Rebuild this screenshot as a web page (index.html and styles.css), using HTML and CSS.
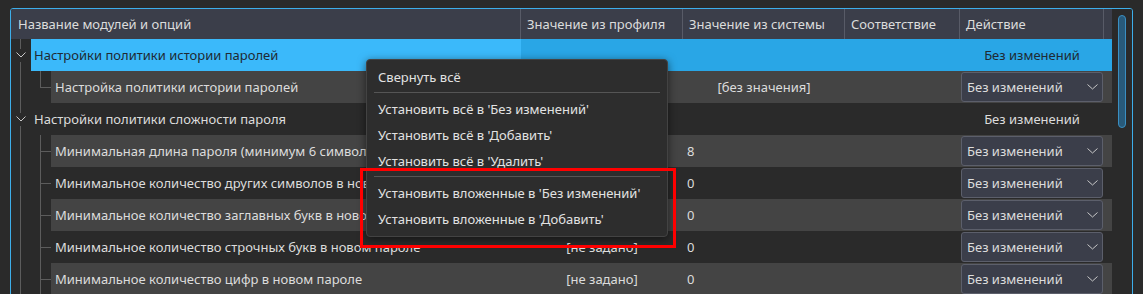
FILE: index.html
```html
<!DOCTYPE html>
<html lang="ru">
<head>
<meta charset="utf-8">
<link rel="stylesheet" href="styles.css">
</head>
<body>
<div class="app">
  <div class="frame">
    <div class="table">
      <div class="grid header">
        <div class="hc first">Название модулей и опций</div>
        <div class="hc">Значение из профиля</div>
        <div class="hc">Значение из системы</div>
        <div class="hc">Соответствие</div>
        <div class="hc">Действие</div>
        <div class="hc last"></div>
      </div>

      <div class="grid row sel">
        <div class="name"><span class="ind group"><svg width="10" height="6" viewBox="0 0 10 6"><polyline points="0.5,0.5 5,5 9.5,0.5" fill="none" stroke="#c8c8c8" stroke-width="1"/></svg></span><span class="label top">Настройки политики истории паролей</span></div>
        <div class="c"></div>
        <div class="c"></div>
        <div class="c"></div>
        <div class="c center">Без изменений</div>
        <div class="c"></div>
      </div>

      <div class="grid row alt">
        <div class="name"><span class="ind vline"></span><span class="ind lastchild"></span><span class="label">Настройка политики истории паролей</span></div>
        <div class="c"></div>
        <div class="c center">[без значения]</div>
        <div class="c"></div>
        <div class="c"><div class="combo"><span>Без изменений</span><svg width="11" height="6" viewBox="0 0 11 6"><polyline points="0.5,0.5 5.5,5 10.5,0.5" fill="none" stroke="#c8c8c8" stroke-width="1"/></svg></div></div>
        <div class="c"></div>
      </div>

      <div class="grid row">
        <div class="name"><span class="ind group"><svg width="10" height="6" viewBox="0 0 10 6"><polyline points="0.5,0.5 5,5 9.5,0.5" fill="none" stroke="#c8c8c8" stroke-width="1"/></svg></span><span class="label top">Настройки политики сложности пароля</span></div>
        <div class="c"></div>
        <div class="c"></div>
        <div class="c"></div>
        <div class="c center">Без изменений</div>
        <div class="c"></div>
      </div>

      <div class="grid row alt">
        <div class="name"><span class="ind vline"></span><span class="ind child"></span><span class="label">Минимальная длина пароля (минимум 6 символов)</span></div>
        <div class="c"></div>
        <div class="c num">8</div>
        <div class="c"></div>
        <div class="c"><div class="combo"><span>Без изменений</span><svg width="11" height="6" viewBox="0 0 11 6"><polyline points="0.5,0.5 5.5,5 10.5,0.5" fill="none" stroke="#c8c8c8" stroke-width="1"/></svg></div></div>
        <div class="c"></div>
      </div>

      <div class="grid row">
        <div class="name"><span class="ind vline"></span><span class="ind child"></span><span class="label">Минимальное количество других символов в новом пароле</span></div>
        <div class="c"></div>
        <div class="c num">0</div>
        <div class="c"></div>
        <div class="c"><div class="combo"><span>Без изменений</span><svg width="11" height="6" viewBox="0 0 11 6"><polyline points="0.5,0.5 5.5,5 10.5,0.5" fill="none" stroke="#c8c8c8" stroke-width="1"/></svg></div></div>
        <div class="c"></div>
      </div>

      <div class="grid row alt">
        <div class="name"><span class="ind vline"></span><span class="ind child"></span><span class="label">Минимальное количество заглавных букв в новом пароле</span></div>
        <div class="c"></div>
        <div class="c num">0</div>
        <div class="c"></div>
        <div class="c"><div class="combo"><span>Без изменений</span><svg width="11" height="6" viewBox="0 0 11 6"><polyline points="0.5,0.5 5.5,5 10.5,0.5" fill="none" stroke="#c8c8c8" stroke-width="1"/></svg></div></div>
        <div class="c"></div>
      </div>

      <div class="grid row">
        <div class="name"><span class="ind vline"></span><span class="ind child"></span><span class="label">Минимальное количество строчных букв в новом пароле</span></div>
        <div class="c center">[не задано]</div>
        <div class="c num">0</div>
        <div class="c"></div>
        <div class="c"><div class="combo"><span>Без изменений</span><svg width="11" height="6" viewBox="0 0 11 6"><polyline points="0.5,0.5 5.5,5 10.5,0.5" fill="none" stroke="#c8c8c8" stroke-width="1"/></svg></div></div>
        <div class="c"></div>
      </div>

      <div class="grid row alt">
        <div class="name"><span class="ind vline"></span><span class="ind child"></span><span class="label">Минимальное количество цифр в новом пароле</span></div>
        <div class="c center">[не задано]</div>
        <div class="c num">0</div>
        <div class="c"></div>
        <div class="c"><div class="combo"><span>Без изменений</span><svg width="11" height="6" viewBox="0 0 11 6"><polyline points="0.5,0.5 5.5,5 10.5,0.5" fill="none" stroke="#c8c8c8" stroke-width="1"/></svg></div></div>
        <div class="c"></div>
      </div>
    </div>
    <div class="scroll"><div class="handle"></div></div>
  </div>

  <div class="menu">
    <div class="mi">Свернуть всё</div>
    <div class="sep"></div>
    <div class="mi">Установить всё в 'Без изменений'</div>
    <div class="mi">Установить всё в 'Добавить'</div>
    <div class="mi">Установить всё в 'Удалить'</div>
    <div class="sep second"></div>
    <div class="mi">Установить вложенные в 'Без изменений'</div>
    <div class="mi">Установить вложенные в 'Добавить'</div>
  </div>

  <div class="annot"></div>
</div>
</body>
</html>
```

FILE: styles.css
```css
html, body {
  margin: 0;
  height: 294px;
  overflow: hidden;
  background: #2a2a2a;
}

body {
  font-family: "Noto Sans", sans-serif;
  font-size: 13px;
  color: #dcdcdc;
}

.app {
  position: relative;
  height: 294px;
  overflow: hidden;
  padding: 8px 0 0 10px;
  box-sizing: border-box;
}

.frame {
  display: flex;
  width: 1121px;
  height: 300px;
  border: 1px solid #3daee9;
  border-radius: 3px;
  overflow: hidden;
}

.table {
  width: 1101px;
  flex: none;
}

.grid {
  display: grid;
  grid-template-columns: 510px 162px 162px 115px 144px 8px;
}

.header {
  height: 30px;
  background: #3b3e4a;
}

.hc {
  display: flex;
  align-items: center;
  padding-left: 6px;
  border-right: 1px solid #585b67;
  white-space: nowrap;
  overflow: hidden;
}

.hc.first {
  padding-left: 7px;
}

.hc.last {
  border-right: none;
  padding: 0;
}

.row {
  height: 32px;
  background: #2a2a2a;
}

.name {
  display: flex;
  height: 32px;
  min-width: 0;
}

.ind {
  flex: none;
  width: 20px;
  height: 32px;
  display: flex;
  align-items: center;
  justify-content: center;
}

.ind.vline {
  background: linear-gradient(#5c5c5c, #5c5c5c) 9px 0 / 1px 100% no-repeat;
}

.ind.group {
  background:
    linear-gradient(#5c5c5c, #5c5c5c) 9px 0 / 1px 10px no-repeat,
    linear-gradient(#5c5c5c, #5c5c5c) 9px 23px / 1px 9px no-repeat;
}

.ind.child {
  background:
    linear-gradient(#5c5c5c, #5c5c5c) 9px 0 / 1px 100% no-repeat,
    linear-gradient(#5c5c5c, #5c5c5c) 9px 16px / 11px 1px no-repeat;
}

.ind.lastchild {
  background:
    linear-gradient(#5c5c5c, #5c5c5c) 9px 0 / 1px 17px no-repeat,
    linear-gradient(#5c5c5c, #5c5c5c) 9px 16px / 11px 1px no-repeat;
}

.label {
  flex: 1;
  min-width: 0;
  display: flex;
  align-items: center;
  padding-left: 4px;
  white-space: nowrap;
  overflow: hidden;
}

.label.top {
  padding-left: 3px;
}

.c {
  display: flex;
  align-items: center;
  white-space: nowrap;
  overflow: hidden;
}

.c.center {
  justify-content: center;
}

.c.num {
  padding-left: 4px;
}

.row.alt .label,
.row.alt .c {
  background: #444444;
}

.row.sel {
  color: #1f2a33;
}

.row.sel .label {
  background: #3bb9fa;
}

.row.sel .c {
  background: #29a6e6;
}

.combo {
  box-sizing: border-box;
  width: 142px;
  height: 30px;
  margin: 0 1px;
  border: 1px solid #5c5f6b;
  border-radius: 3px;
  background: #3b3e4a;
  display: flex;
  align-items: center;
  justify-content: space-between;
  padding: 0 4px 0 5px;
  color: #dcdcdc;
}

.scroll {
  width: 20px;
  flex: none;
  background: #2a2a2a;
}

.handle {
  box-sizing: border-box;
  width: 8px;
  height: 113px;
  margin: 6px 0 0 6px;
  border-radius: 4px;
  background: #285a7a;
  border: 1px solid #3a8fc2;
}

.menu {
  position: absolute;
  left: 366px;
  top: 59px;
  width: 302px;
  box-sizing: border-box;
  padding: 4px 0;
  background: #2d2d2d;
  border: 1px solid #434343;
  border-radius: 4px;
  box-shadow: 0 2px 8px rgba(0, 0, 0, 0.55);
  color: #e2e2e2;
}

.mi {
  height: 26px;
  line-height: 26px;
  padding-left: 11px;
  white-space: nowrap;
}

.sep {
  height: 1px;
  margin: 2px 7px 3px;
  background: #555555;
}

.annot {
  position: absolute;
  left: 360px;
  top: 168px;
  width: 316px;
  height: 80px;
  box-sizing: border-box;
  border: 3px solid #ff0000;
}
```
